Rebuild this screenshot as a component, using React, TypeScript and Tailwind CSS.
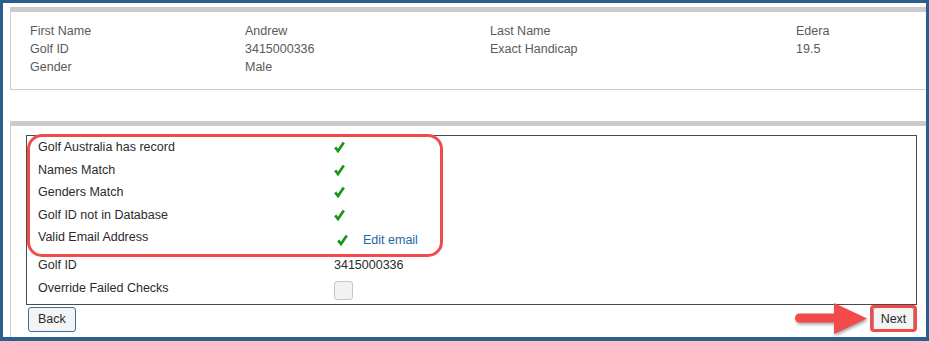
import React from 'react';

const summary = [
  ['First Name', 'Andrew', 'Last Name', 'Edera'],
  ['Golf ID', '3415000336', 'Exact Handicap', '19.5'],
  ['Gender', 'Male', '', ''],
];

const checks = ['Golf Australia has record', 'Names Match', 'Genders Match', 'Golf ID not in Database'];

function Tick() {
  return (
    <svg width="11" height="12" viewBox="0 0 11 12" className="block">
      <path d="M1.2 6.4 L4 10 L9.8 1.4" fill="none" stroke="#16971a" strokeWidth="2.7" strokeLinejoin="miter" />
    </svg>
  );
}

export default function App() {
  return (
    <div className="relative w-[929px] h-[341px] overflow-hidden bg-white border-solid border-[#2d5f8e] border-t-[3px] border-x-[3px] border-b-[4px] font-['Liberation_Sans',Arial,sans-serif] text-[12.5px]">
      <div className="flex flex-col h-full pl-[7px] pt-[4px]">
        {/* member summary */}
        <div className="border-t-[5px] border-l border-b border-[#cbcbcb] pt-[10px] pb-[13px] pl-[19px] text-[#5a5a5a]">
          {summary.map((r, i) => (
            <div key={i} className="grid grid-cols-[215px_245px_306px_1fr] leading-[18px] h-[18px]">
              {r.map((c, j) => <span key={j}>{c}</span>)}
            </div>
          ))}
        </div>

        {/* checks */}
        <div className="mt-[31px] flex-1 border-t-[5px] border-l border-[#cbcbcb] pt-[9px] pl-[15px] pr-[9px]">
          <div className="border border-[#4a4a4a] text-[#2b2b2b] pt-[1px]">
            {checks.map((c) => (
              <div key={c} className="flex items-start h-[22.5px]">
                <div className="w-[307px] pl-[11px] leading-[20px]">{c}</div>
                <div className="h-[20px] flex items-center"><Tick /></div>
              </div>
            ))}
            <div className="flex items-start h-[28px]">
              <div className="w-[307px] pl-[11px] leading-[20px]">Valid Email Address</div>
              <div className="mt-[3px] h-[20px] flex items-center pl-[3px] gap-[15px]">
                <Tick />
                <a className="text-[#1f66a3] leading-[20px]">Edit email</a>
              </div>
            </div>
            <div className="flex items-start h-[23px]">
              <div className="w-[307px] pl-[11px] leading-[20px]">Golf ID</div>
              <div className="leading-[20px]">3415000336</div>
            </div>
            <div className="flex items-start h-[26px]">
              <div className="w-[307px] pl-[11px] leading-[20px]">Override Failed Checks</div>
              <div className="mt-[3px] w-[19px] h-[19px] rounded-[3px] border border-[#c6c6c6] bg-[#f2f2f2]" />
            </div>
          </div>

          <div className="flex justify-between mt-[2px] pl-[2px] pr-[3px]">
            <button className="h-[25px] px-[9px] rounded-[3px] border border-[#3a6f9e] bg-[#f4f4f4] text-[#2b2b2b] leading-[23px]">Back</button>
            <button className="h-[25px] w-[41px] rounded-[3px] border border-[#9a9a9a] bg-[#f4f4f4] text-[#2b2b2b] leading-[23px]">Next</button>
          </div>
        </div>
      </div>

      {/* annotations */}
      <div className="absolute left-[24px] top-[131px] w-[416px] h-[123px] rounded-[15px] border-[3px] border-[#f24a4a]" />
      <div className="absolute left-[867px] top-[302px] w-[47px] h-[27px] rounded-[4px] border-[3px] border-[#f24a4a]" />
      <svg className="absolute left-[792px] top-[300px] drop-shadow-[1px_2px_1.5px_rgba(0,0,0,0.35)]" width="76" height="34" viewBox="0 0 76 34">
        <path d="M4.5 10.5 H42 V19.5 H4.5 A4.5 4.5 0 0 1 4.5 10.5 Z" fill="#f24a4a" />
        <path d="M39 0 L72 15.5 L39 31 Z" fill="#f24a4a" />
      </svg>
    </div>
  );
}
